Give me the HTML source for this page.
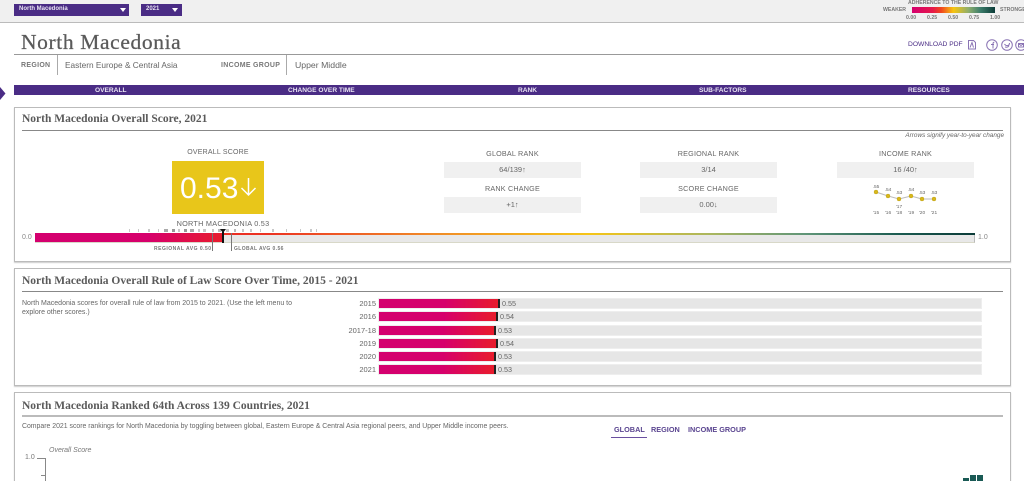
<!DOCTYPE html>
<html><head><meta charset="utf-8"><title>North Macedonia</title>
<style>
html,body{margin:0;padding:0;background:#fff;width:1024px;height:481px;overflow:hidden}
#w{position:absolute;left:0;top:0;width:1024px;height:481px;overflow:hidden;filter:blur(.3px);font-family:"Liberation Sans",sans-serif;color:#555}
.a{position:absolute;white-space:nowrap}
.c{text-align:center}
.serif{font-family:"Liberation Serif",serif}
.card{position:absolute;left:14px;width:995px;border:1px solid #bbb;box-shadow:0 1px 1px #ccc;background:#fff}
.h{position:absolute;left:22px;font-family:"Liberation Serif",serif;font-weight:bold;font-size:11.5px;color:#5a5a5a;white-space:nowrap}
.ln{position:absolute;left:22px;width:981px;height:1px;background:#888}
.lab{position:absolute;font-size:7.2px;color:#666;text-align:center;width:137px;letter-spacing:.2px}
.box{position:absolute;width:137px;height:16px;background:#f0f0f0;font-size:7.5px;line-height:16px;text-align:center;color:#666}
.nav{position:absolute;top:86px;height:10px;line-height:10px;color:#e8e4f2;font-size:6.6px;font-weight:bold}
.bar{position:absolute;left:379px;width:602px;height:9px;background:#e6e6e6;box-shadow:0 0 0 1px #eee}
.fill{position:absolute;left:0;top:0;height:9px;background:linear-gradient(90deg,#d4006f 0%,#d6006c 55%,#e81c2c 100%);border-right:2px solid #222}
.yr{position:absolute;width:50px;left:326px;text-align:right;font-size:7.5px;color:#666}
.val{position:absolute;font-size:7.2px;color:#666}
.lg{font-size:5.2px;font-weight:bold;color:#777;line-height:7px}
.tg{font-size:7.3px;line-height:10px;color:#5a4590;font-weight:bold;top:425px}
</style></head><body><div id="w">

<div class="a" style="left:0;top:0;width:1024px;height:22px;background:#f0f0f0;border-bottom:1px solid #bbb"></div>
<div class="a" style="left:14px;top:4px;width:115px;height:12px;background:#4a2c85;color:#e8e4f2;font-size:6px;font-weight:bold;line-height:10px;text-indent:5px">North Macedonia</div>
<div class="a" style="left:120px;top:8px;border-left:3px solid transparent;border-right:3px solid transparent;border-top:4px solid #fff"></div>
<div class="a" style="left:141px;top:4px;width:41px;height:12px;background:#4a2c85;color:#e8e4f2;font-size:6px;font-weight:bold;line-height:10px;text-indent:5px">2021</div>
<div class="a" style="left:172px;top:8px;border-left:3px solid transparent;border-right:3px solid transparent;border-top:4px solid #fff"></div>

<div class="a lg" style="left:908px;top:0">ADHERENCE TO THE RULE OF LAW</div>
<div class="a lg" style="left:883px;top:7px">WEAKER</div>
<div class="a lg" style="left:1000px;top:7px">STRONGER</div>
<div class="a" style="left:912px;top:7px;width:83px;height:6px;background:linear-gradient(90deg,#d4006f 0%,#e6194a 25%,#f0451f 35%,#f6c512 50%,#8fae6c 68%,#3f7f6c 82%,#0b3b38 100%)"></div>
<div class="a lg" style="left:906px;top:15px">0.00</div>
<div class="a lg" style="left:927px;top:15px">0.25</div>
<div class="a lg" style="left:948px;top:15px">0.50</div>
<div class="a lg" style="left:969px;top:15px">0.75</div>
<div class="a lg" style="left:990px;top:15px">1.00</div>

<div class="a serif" style="left:21px;top:30px;font-size:21.5px;line-height:25px;color:#5a5a5a;letter-spacing:.62px;-webkit-text-stroke:.25px #5a5a5a">North Macedonia</div>
<div class="a" style="left:14px;top:54px;width:1010px;height:1px;background:#999"></div>
<div class="a" style="left:21px;top:60px;font-size:7px;line-height:11px;color:#777;letter-spacing:.3px;font-weight:bold">REGION</div>
<div class="a" style="left:57px;top:55px;width:1px;height:20px;background:#aaa"></div>
<div class="a" style="left:65px;top:59px;font-size:8.3px;line-height:12px;color:#666">Eastern Europe &amp; Central Asia</div>
<div class="a" style="left:221px;top:60px;font-size:7px;line-height:11px;color:#777;letter-spacing:.3px;font-weight:bold">INCOME GROUP</div>
<div class="a" style="left:286px;top:55px;width:1px;height:20px;background:#aaa"></div>
<div class="a" style="left:295px;top:59px;font-size:8.7px;line-height:12px;color:#666">Upper Middle</div>

<div class="a" style="left:908px;top:40px;font-size:6.7px;line-height:10px;color:#4a2c85">DOWNLOAD PDF</div>
<svg class="a" style="left:960px;top:36px" width="64" height="16" viewBox="0 0 64 16" fill="none" stroke="#8a74b4" stroke-width="1">
<path d="M8.500 4.500h5l2 2v6.500h-7z"/><path d="M10 11.500l2-5 1.500 5"/>
<circle cx="32" cy="9" r="5.300"/><path d="M33 12.500V7.500c0-1 .6-1.300 1.300-1.300M31 8.500h3"/>
<circle cx="47" cy="9" r="5.300"/><path d="M44.500 8c1 1.500 2 2 3.500 1.500s1.500-2 1.500-2.500M45 11c2 .5 3.500 0 4-1.500"/>
<circle cx="61" cy="9" r="5.300"/><path d="M58.500 7.500h5v3.500h-5zM58.500 7.500l2.500 2 2.500-2"/>
</svg>

<div class="a" style="left:14px;top:85px;width:1010px;height:10px;background:#4a2c85"></div>
<div class="nav" style="left:95px">OVERALL</div>
<div class="nav" style="left:288px">CHANGE OVER TIME</div>
<div class="nav" style="left:518px">RANK</div>
<div class="nav" style="left:699px">SUB-FACTORS</div>
<div class="nav" style="left:908px">RESOURCES</div>
<svg class="a" style="left:0;top:86px" width="6" height="16"><path d="M0 1l5.500 6.500L0 14z" fill="#4a2c85"/></svg>

<div class="card" style="top:107px;height:153px"></div>
<div class="h" style="top:113px">North Macedonia Overall Score, 2021</div>
<div class="ln" style="top:130px"></div>
<div class="a" style="right:20px;top:131px;font-size:6.4px;line-height:9px;font-style:italic;color:#666">Arrows signify year-to-year change</div>

<div class="a c" style="left:172px;top:148px;width:92px;font-size:7px;line-height:10px;color:#666;letter-spacing:.2px">OVERALL SCORE</div>
<div class="a" style="left:172px;top:161px;width:92px;height:53px;background:#e8c61a"></div>
<div class="a" style="left:180px;top:171px;font-size:30px;line-height:36px;color:#fff">0.53</div>
<svg class="a" style="left:240px;top:177px" width="17" height="20" fill="none" stroke="#fff" stroke-width="1.500"><path d="M8.500 1v17M1.500 11l7 7 7-7"/></svg>

<div class="a c" style="left:143px;top:219px;width:160px;font-size:7.3px;line-height:10px;color:#666;letter-spacing:.25px">NORTH MACEDONIA 0.53</div>
<div class="a" style="left:22px;top:233px;font-size:7px;line-height:10px;color:#888">0.0</div>
<div class="a" style="left:978px;top:233px;font-size:7px;line-height:10px;color:#888">1.0</div>
<div class="a" style="left:35px;top:233px;width:939px;height:9px;background:#e8e8e8;border-right:1px solid #bbb;border-bottom:1px solid #d8d8c8"></div>
<div class="a" style="left:35px;top:233px;width:940px;height:2px;background:linear-gradient(90deg,#e81c2c 0%,#ec3322 25%,#f08a28 42%,#f5c518 59%,#a9b660 72%,#5f9578 82%,#1a5a50 92%,#0b3b38 100%)"></div>
<div class="a" style="left:35px;top:233px;width:188px;height:9px;background:linear-gradient(90deg,#d4006f 0%,#d6006c 60%,#e81c2c 100%)"></div>
<svg class="a" style="left:120px;top:229px" width="400" height="4" fill="#c8c8c8">
<rect x="9" y="0" width="1" height="3"/><rect x="18" y="0" width="1" height="3"/><rect x="28" y="0" width="2" height="3"/><rect x="38" y="0" width="1" height="3"/><rect x="44" y="0" width="4" height="3" fill="#aaa"/><rect x="52" y="0" width="3" height="3" fill="#999"/><rect x="58" y="0" width="2" height="3"/><rect x="64" y="0" width="3" height="3" fill="#999"/><rect x="70" y="0" width="4" height="3" fill="#aaa"/><rect x="78" y="0" width="2" height="3"/><rect x="83" y="0" width="3" height="3"/><rect x="92" y="0" width="2" height="3"/><rect x="98" y="0" width="3" height="3" fill="#b8b8b8"/><rect x="106" y="0" width="3" height="3"/><rect x="114" y="0" width="2" height="3" fill="#b8b8b8"/><rect x="122" y="0" width="2" height="3"/><rect x="130" y="0" width="2" height="3"/><rect x="140" y="0" width="1" height="3"/><rect x="152" y="0" width="2" height="3"/><rect x="166" y="0" width="1" height="3"/><rect x="180" y="0" width="1" height="3"/><rect x="190" y="0" width="2" height="3"/><rect x="196" y="0" width="1" height="3"/>
</svg>
<div class="a" style="left:222px;top:232px;width:2px;height:11px;background:#111"></div>
<div class="a" style="left:220px;top:229px;border-left:3px solid transparent;border-right:3px solid transparent;border-top:4px solid #111"></div>
<div class="a" style="left:212px;top:233px;width:1px;height:18px;background:#777"></div>
<div class="a" style="left:231px;top:233px;width:1px;height:18px;background:#777"></div>
<div class="a" style="left:154px;top:246px;font-size:5px;font-weight:bold;line-height:7px;color:#777;letter-spacing:.5px">REGIONAL AVG 0.50</div>
<div class="a" style="left:234px;top:246px;font-size:5px;font-weight:bold;line-height:7px;color:#777;letter-spacing:.4px">GLOBAL AVG 0.56</div>

<div class="lab" style="left:444px;top:149px;line-height:10px">GLOBAL RANK</div>
<div class="box" style="left:444px;top:162px">64/139&#8593;</div>
<div class="lab" style="left:444px;top:184px;line-height:10px">RANK CHANGE</div>
<div class="box" style="left:444px;top:197px">+1&#8593;</div>
<div class="lab" style="left:640px;top:149px;line-height:10px">REGIONAL RANK</div>
<div class="box" style="left:640px;top:162px">3/14</div>
<div class="lab" style="left:640px;top:184px;line-height:10px">SCORE CHANGE</div>
<div class="box" style="left:640px;top:197px">0.00&#8595;</div>
<div class="lab" style="left:837px;top:149px;line-height:10px">INCOME RANK</div>
<div class="box" style="left:837px;top:162px">16 /40&#8593;</div>

<svg class="a" style="left:868px;top:182px" width="76" height="36" font-family="Liberation Sans, sans-serif" font-size="4.800" fill="#666" text-anchor="middle">
<polyline points="8,10 20,14 31,17 43,14 54,17 66,17" fill="none" stroke="#bbb" stroke-width="1"/>
<g fill="#d8b81c" stroke="#b89a18" stroke-width=".4"><circle cx="8" cy="10" r="2"/><circle cx="20" cy="14" r="2"/><circle cx="31" cy="17" r="2"/><circle cx="43" cy="14" r="2"/><circle cx="54" cy="17" r="2"/><circle cx="66" cy="17" r="2"/></g>
<text x="8" y="6">.55</text><text x="20" y="9">.54</text><text x="31" y="12">.53</text><text x="43" y="9">.54</text><text x="54" y="12">.53</text><text x="66" y="12">.53</text>
<text x="31" y="26">'17</text>
<text x="8" y="32">'15</text><text x="20" y="32">'16</text><text x="31" y="32">'18</text><text x="43" y="32">'19</text><text x="54" y="32">'20</text><text x="66" y="32">'21</text>
</svg>

<div class="card" style="top:268px;height:116px"></div>
<div class="h" style="top:275px">North Macedonia Overall Rule of Law Score Over Time, 2015 - 2021</div>
<div class="ln" style="top:291px"></div>
<div class="a" style="left:22px;top:299px;font-size:7px;line-height:9px;color:#666">North Macedonia scores for overall rule of law from 2015 to 2021. (Use the left menu to<br>explore other scores.)</div>

<div class="yr" style="top:299px;line-height:10px">2015</div><div class="bar" style="top:299px"><div class="fill" style="width:119px"></div></div><div class="val" style="left:502px;top:299px;line-height:10px">0.55</div>
<div class="yr" style="top:312px;line-height:10px">2016</div><div class="bar" style="top:312px"><div class="fill" style="width:117px"></div></div><div class="val" style="left:500px;top:312px;line-height:10px">0.54</div>
<div class="yr" style="top:326px;line-height:10px">2017-18</div><div class="bar" style="top:326px"><div class="fill" style="width:115px"></div></div><div class="val" style="left:498px;top:326px;line-height:10px">0.53</div>
<div class="yr" style="top:339px;line-height:10px">2019</div><div class="bar" style="top:339px"><div class="fill" style="width:117px"></div></div><div class="val" style="left:500px;top:339px;line-height:10px">0.54</div>
<div class="yr" style="top:352px;line-height:10px">2020</div><div class="bar" style="top:352px"><div class="fill" style="width:115px"></div></div><div class="val" style="left:498px;top:352px;line-height:10px">0.53</div>
<div class="yr" style="top:365px;line-height:10px">2021</div><div class="bar" style="top:365px"><div class="fill" style="width:115px"></div></div><div class="val" style="left:498px;top:365px;line-height:10px">0.53</div>

<div class="card" style="top:392px;height:100px"></div>
<div class="h" style="top:400px">North Macedonia Ranked 64th Across 139 Countries, 2021</div>
<div class="ln" style="top:415px;height:2px;background:#bbb"></div>
<div class="a" style="left:22px;top:422px;font-size:6.9px;line-height:10px;color:#666">Compare 2021 score rankings for North Macedonia by toggling between global, Eastern Europe &amp; Central Asia regional peers, and Upper Middle income peers.</div>
<div class="a tg" style="left:614px">GLOBAL</div>
<div class="a" style="left:611px;top:437px;width:36px;height:1px;background:#6a4fa0"></div>
<div class="a tg" style="left:651px">REGION</div>
<div class="a tg" style="left:688px">INCOME GROUP</div>
<div class="a" style="left:49px;top:446px;font-size:7px;line-height:10px;font-style:italic;color:#777">Overall Score</div>
<div class="a" style="left:25px;top:453px;font-size:7px;line-height:10px;color:#777">1.0</div>
<div class="a" style="left:37px;top:458px;width:8px;height:1px;background:#888"></div>
<div class="a" style="left:45px;top:458px;width:1px;height:23px;background:#888"></div>
<div class="a" style="left:41px;top:475px;width:4px;height:1px;background:#888"></div>
<div class="a" style="left:963px;top:478px;width:6px;height:3px;background:#1a5a55"></div>
<div class="a" style="left:970px;top:475px;width:6px;height:6px;background:#1a5a55"></div>
<div class="a" style="left:977px;top:475px;width:6px;height:6px;background:#1a5a55"></div>

</div></body></html>
